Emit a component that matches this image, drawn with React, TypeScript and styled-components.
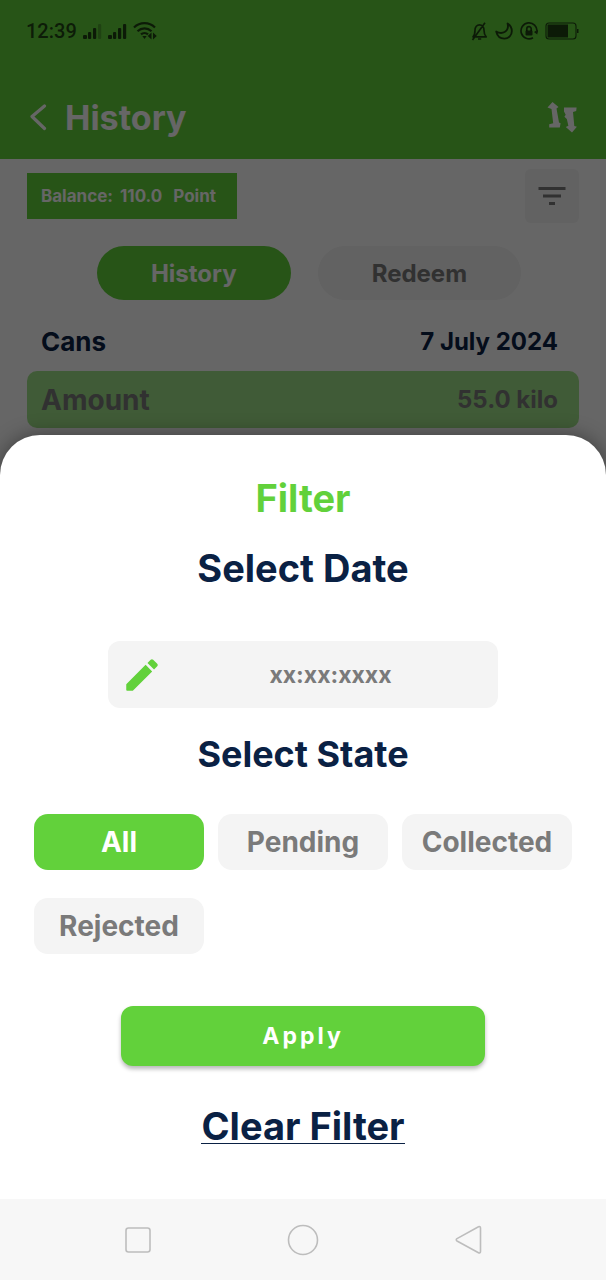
import React, { useState } from 'react';
import styled, { createGlobalStyle } from 'styled-components';
import { MdFilterList } from 'react-icons/md';

const green = '#62d13b';
const navy = '#0a2144';
const grey = '#7a7a7a';
const soft = '#f4f4f4';

const GlobalStyle = createGlobalStyle`
  *, *::before, *::after { box-sizing: border-box; }
  body {
    margin: 0;
    background: #fff;
    font-family: Inter, "Open Sans", sans-serif;
    font-weight: 700;
  }
  button, input { font: inherit; border: 0; padding: 0; }
  button { cursor: pointer; background: none; color: inherit; }
  h1, h2, p { margin: 0; font: inherit; }
  svg { display: block; flex: none; }
`;

const Phone = styled.div`
  display: grid;
  grid-template: 1fr auto / 100%;
  min-height: 100vh;
`;

const Page = styled.main`
  grid-area: 1 / 1;
  background: #fff;
`;

const TopBar = styled.header`
  background: ${green};
  color: #fff;
`;

const StatusBar = styled.div`
  display: flex;
  align-items: center;
  justify-content: space-between;
  height: 62px;
  padding: 0 27px 0 26px;
  color: rgba(0, 0, 0, 0.68);
  font: 500 20px/24px Roboto, sans-serif;
`;

const StatusGroup = styled.div<{ $gap: number }>`
  display: flex;
  align-items: center;
  gap: ${(p) => p.$gap}px;
`;

const TitleRow = styled.div`
  display: flex;
  align-items: center;
  gap: 18px;
  height: 97px;
  padding: 14px 28px 0 30px;
`;

const PageTitle = styled.h1`
  flex: 1;
  font-size: 34px;
  line-height: 40px;
`;

const Content = styled.div`
  padding: 10px 27px 0;
`;

const BalanceRow = styled.div`
  display: flex;
  align-items: center;
  justify-content: space-between;
`;

const Balance = styled.p`
  display: flex;
  gap: 7px;
  min-width: 210px;
  padding: 12px 14px;
  background: ${green};
  color: #fff;
  font-size: 17px;
  line-height: 22px;
`;

const Points = styled.span`
  margin-right: 4px;
`;

const FilterButton = styled.button`
  display: grid;
  place-items: center;
  width: 54px;
  height: 54px;
  border-radius: 6px;
  background: ${soft};
  color: ${grey};
`;

const Tabs = styled.div`
  display: flex;
  justify-content: center;
  gap: 27px;
  margin: 23px 0;
  padding-left: 12px;
`;

const Tab = styled.button<{ $active?: boolean }>`
  padding: 0 54px;
  height: 54px;
  border-radius: 27px;
  background: ${(p) => (p.$active ? green : soft)};
  color: ${(p) => (p.$active ? '#fff' : grey)};
  font-size: 24px;
`;

const RecordHead = styled.div`
  display: flex;
  align-items: center;
  justify-content: space-between;
  height: 48px;
  padding: 0 21px 11px 14px;
  color: ${navy};
  font-size: 26px;
`;

const RecordRow = styled.div`
  display: flex;
  align-items: center;
  justify-content: space-between;
  height: 57px;
  padding: 0 21px 0 14px;
  border-radius: 10px;
  background: rgba(98, 209, 59, 0.6);
  color: ${grey};
  font-size: 28px;
`;

const RecordValue = styled.span`
  font-size: 24px;
`;

const Backdrop = styled.div`
  grid-area: 1 / 1;
  z-index: 1;
  display: flex;
  flex-direction: column;
  justify-content: flex-end;
  background: rgba(0, 0, 0, 0.6);
`;

const Sheet = styled.section`
  display: flex;
  flex-direction: column;
  align-items: center;
  padding: 39px 34px 55px;
  border-radius: 40px 40px 0 0;
  background: #fff;
  box-shadow: 0 0 20px rgba(0, 0, 0, 0.4);
  color: ${navy};
  font-size: 38px;
  line-height: 48px;
`;

const SheetTitle = styled.h1`
  color: ${green};
`;

const SheetHeading = styled.h2<{ $small?: boolean }>`
  margin-top: 22px;
  font-size: ${(p) => (p.$small ? 36 : 38)}px;
`;

const DateField = styled.label`
  display: flex;
  align-items: center;
  align-self: stretch;
  height: 67px;
  margin: 49px 74px 0;
  padding-left: 13px;
  border-radius: 12px;
  background: ${soft};
`;

const DateInput = styled.input`
  flex: 1;
  min-width: 0;
  background: none;
  color: ${grey};
  font-size: 23px;
  line-height: 28px;
  text-align: center;
  outline: none;
  &::placeholder { color: ${grey}; opacity: 1; }
`;

const States = styled.div`
  display: grid;
  grid-template-columns: repeat(3, 1fr);
  align-self: stretch;
  gap: 28px 14px;
  margin: 36px 0 52px;
`;

const Chip = styled.button<{ $active: boolean }>`
  height: 56px;
  border-radius: 14px;
  background: ${(p) => (p.$active ? green : soft)};
  color: ${(p) => (p.$active ? '#fff' : grey)};
  font-size: 28px;
`;

const ApplyButton = styled.button`
  width: 364px;
  max-width: 100%;
  height: 60px;
  border-radius: 12px;
  background: ${green};
  box-shadow: 0 3px 4px rgba(0, 0, 0, 0.28);
  color: #fff;
  font-size: 23px;
  letter-spacing: 3px;
`;

const ClearButton = styled.button`
  margin-top: 43px;
  border-bottom: 1px solid ${navy};
  line-height: 34px;
`;

const NavBar = styled.nav`
  z-index: 2;
  display: flex;
  align-items: center;
  justify-content: space-between;
  height: 81px;
  padding: 0 122px;
  background: #f7f7f7;
  color: #bdbdbd;
`;

const NavButton = styled.button`
  display: grid;
  place-items: center;
  width: 32px;
  height: 32px;
  color: inherit;
`;

const SignalIcon = ({ weak }: { weak?: boolean }) => (
  <svg width="19" height="16" viewBox="0 0 19 16" fill="currentColor">
    <rect x="0" y="12" width="4" height="4" rx="1" />
    <rect x="5" y="9" width="3.2" height="7" rx="1" />
    <rect x="10" y="5" width="3.2" height="11" rx="1" />
    <rect x="15" y="1" width="3.2" height="15" rx="1" opacity={weak ? 0.3 : 1} />
  </svg>
);

const WifiIcon = () => (
  <svg width="24" height="18" viewBox="0 0 24 18" fill="none" stroke="currentColor" strokeWidth="2.2">
    <path d="M1 5.5C7-.3 16-.3 22 5.5M4.5 9.2c4-3.8 10-3.8 14 0M8 12.4c2-1.9 5-1.9 7 0" />
    <path d="M9.3 14h4.4l-2.2 3zM18.5 10.5v7l-3.8-3.5zM20 10.5v7l3.8-3.5z" fill="currentColor" stroke="none" />
  </svg>
);

const MutedBellIcon = () => (
  <svg width="17" height="19" viewBox="0 0 17 19" fill="none" stroke="currentColor" strokeWidth="1.7" strokeLinejoin="round">
    <path d="M2 14.8c1.600-1.500 2-3 2-6.500C4 5 6 2.800 8.500 2.800S13 5 13 8.300c0 3.500.6 5 2.200 6.500zM7 17h3.200M1.500 18 14 .8" />
  </svg>
);

const MoonIcon = () => (
  <svg width="18" height="18" viewBox="0 0 18 18" fill="none" stroke="currentColor" strokeWidth="1.9" strokeLinejoin="round">
    <path d="M12.600 1.500c1 4-.3 7-3 8.500-2.400 1.300-5.400 1.200-8.400-.4 1 4.400 4.300 7 8.200 7 4.400 0 7.400-3.400 7.400-7.400 0-3.200-1.600-6.200-4.200-7.700z" />
  </svg>
);

const RotationLockIcon = () => (
  <svg width="18" height="18" viewBox="0 0 18 18" fill="none" stroke="currentColor" strokeWidth="1.7">
    <path d="M13 15.800A8 8 0 1 1 17 9.500M17.500 8l-.8 3-2-1.500" />
    <path d="M6.800 9V6.800a2.200 2.200 0 0 1 4.400 0V9" />
    <rect x="5.500" y="8.500" width="7" height="5" rx="1" fill="currentColor" stroke="none" />
  </svg>
);

const BatteryIcon = () => (
  <svg width="34" height="18" viewBox="0 0 34 18" fill="none" stroke="currentColor" strokeWidth="1.1">
    <rect x="1" y="1" width="30" height="16" rx="3" />
    <path d="M2.500 2.500h20.500v13H2.500zM32 7h1.500v4H32z" fill="currentColor" stroke="none" />
  </svg>
);

const BackIcon = () => (
  <svg width="17" height="28" viewBox="0 0 17 28" fill="none" stroke="currentColor" strokeWidth="3.200" strokeLinecap="round" strokeLinejoin="round">
    <path d="M14.500 2 2 12.500l12.500 12" />
  </svg>
);

const SwapIcon = () => (
  <svg width="31" height="31" viewBox="0 0 31 31" fill="currentColor">
    <path d="M5.500 0l6 5-2 1.400L12 20.500l1.600.8-.8 4.200H2.200v-3.300l4-1L4.500 7 .5 5.500z" />
    <path d="M17 5.500h12.600l-.4 3.600-3.200.8 1.300 14 2.600.8L25 30.500l-6.200-5.600 2.600-1.200-1.600-6.600-2.400-2.400 1.300-1.900-1.700-3.300z" />
  </svg>
);

const PencilIcon = () => (
  <svg width="42" height="42" viewBox="0 0 24 24" fill={green}>
    <path d="M3 17.460v3.040c0 .28.22.5.5.5h3.040c.13 0 .26-.05.35-.15L17.810 9.940l-3.750-3.750L3.150 17.100c-.1.1-.15.22-.15.36zM20.710 7.040a.996.996 0 0 0 0-1.410l-2.340-2.340a.996.996 0 0 0-1.410 0l-1.830 1.830 3.750 3.750 1.830-1.830z" />
  </svg>
);

const NavIcon = ({ children }: { children: React.ReactNode }) => (
  <svg width="32" height="32" viewBox="0 0 32 32" fill="none" stroke="currentColor" strokeWidth="1.600" strokeLinejoin="round">
    {children}
  </svg>
);

const states = ['All', 'Pending', 'Collected', 'Rejected'];

export default function App() {
  const [selected, setSelected] = useState('All');
  const [date, setDate] = useState('');

  const clear = () => {
    setSelected('All');
    setDate('');
  };

  return (
    <>
      <GlobalStyle />
      <Phone>
        <Page>
          <TopBar>
            <StatusBar>
              <StatusGroup $gap={6}>
                <span>12:39</span>
                <SignalIcon weak />
                <SignalIcon />
                <WifiIcon />
              </StatusGroup>
              <StatusGroup $gap={7}>
                <MutedBellIcon />
                <MoonIcon />
                <RotationLockIcon />
                <BatteryIcon />
              </StatusGroup>
            </StatusBar>
            <TitleRow>
              <button type="button" aria-label="Back"><BackIcon /></button>
              <PageTitle>History</PageTitle>
              <button type="button" aria-label="Swap order"><SwapIcon /></button>
            </TitleRow>
          </TopBar>
          <Content>
            <BalanceRow>
              <Balance>
                <span>Balance:</span>
                <Points>110.0</Points>
                <span>Point</span>
              </Balance>
              <FilterButton type="button" aria-label="Filter"><MdFilterList size={36} /></FilterButton>
            </BalanceRow>
            <Tabs>
              <Tab type="button" $active>History</Tab>
              <Tab type="button">Redeem</Tab>
            </Tabs>
            <RecordHead>
              <span>Cans</span>
              <RecordValue>7 July 2024</RecordValue>
            </RecordHead>
            <RecordRow>
              <span>Amount</span>
              <RecordValue>55.0 kilo</RecordValue>
            </RecordRow>
          </Content>
        </Page>

        <Backdrop>
          <Sheet role="dialog" aria-label="Filter">
            <SheetTitle>Filter</SheetTitle>
            <SheetHeading>Select Date</SheetHeading>
            <DateField>
              <PencilIcon />
              <DateInput
                aria-label="Select Date"
                placeholder="xx:xx:xxxx"
                value={date}
                onChange={(e) => setDate(e.target.value)}
              />
            </DateField>
            <SheetHeading $small>Select State</SheetHeading>
            <States>
              {states.map((s) => (
                <Chip
                  key={s}
                  type="button"
                  $active={s === selected}
                  aria-pressed={s === selected}
                  onClick={() => setSelected(s)}
                >
                  {s}
                </Chip>
              ))}
            </States>
            <ApplyButton type="button">Apply</ApplyButton>
            <ClearButton type="button" onClick={clear}>Clear Filter</ClearButton>
          </Sheet>
        </Backdrop>

        <NavBar>
          <NavButton type="button" aria-label="Recent apps">
            <NavIcon><rect x="4" y="4" width="24" height="24" rx="2.500" /></NavIcon>
          </NavButton>
          <NavButton type="button" aria-label="Home">
            <NavIcon><circle cx="16" cy="16" r="14.500" /></NavIcon>
          </NavButton>
          <NavButton type="button" aria-label="Go back">
            <NavIcon><path d="M26.500 2.800c1-.6 2 0 2 1.200v23.500c0 1.200-1 1.800-2 1.200L5 17c-1-.6-1-1.800 0-2.400z" /></NavIcon>
          </NavButton>
        </NavBar>
      </Phone>
    </>
  );
}
